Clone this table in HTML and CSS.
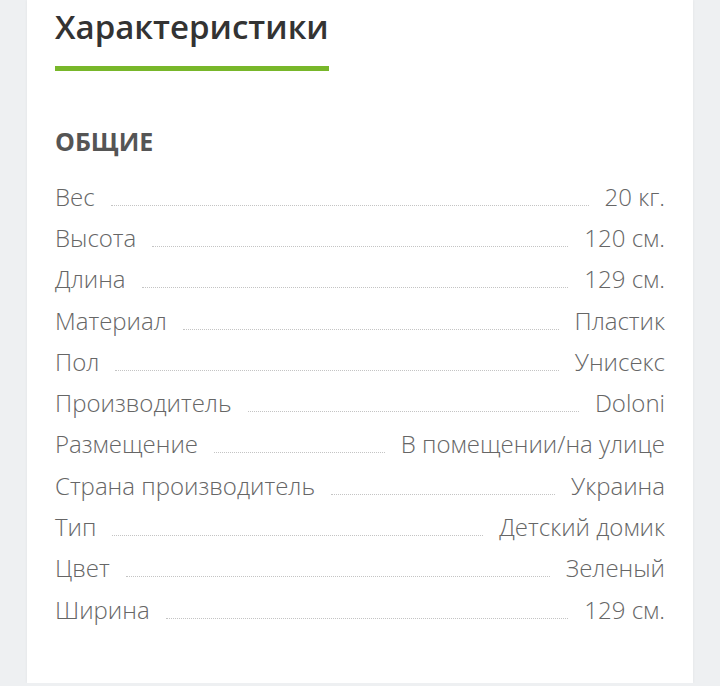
FILE: index.html
```html
<!DOCTYPE html>
<html lang="ru">
<head>
<meta charset="utf-8">
<title>Характеристики</title>
<link rel="stylesheet" href="styles.css">
</head>
<body>
<div class="card">
  <h2 class="title">Характеристики</h2>
  <h3 class="group">ОБЩИЕ</h3>
  <div class="specs">
    <div class="row"><span class="name">Вес</span><span class="dots"></span><span class="val">20 кг.</span></div>
    <div class="row"><span class="name">Высота</span><span class="dots"></span><span class="val">120 см.</span></div>
    <div class="row"><span class="name">Длина</span><span class="dots"></span><span class="val">129 см.</span></div>
    <div class="row"><span class="name">Материал</span><span class="dots"></span><span class="val">Пластик</span></div>
    <div class="row"><span class="name">Пол</span><span class="dots"></span><span class="val">Унисекс</span></div>
    <div class="row"><span class="name">Производитель</span><span class="dots"></span><span class="val">Doloni</span></div>
    <div class="row"><span class="name">Размещение</span><span class="dots"></span><span class="val">В помещении/на улице</span></div>
    <div class="row"><span class="name">Страна производитель</span><span class="dots"></span><span class="val">Украина</span></div>
    <div class="row"><span class="name">Тип</span><span class="dots"></span><span class="val">Детский домик</span></div>
    <div class="row"><span class="name">Цвет</span><span class="dots"></span><span class="val">Зеленый</span></div>
    <div class="row"><span class="name">Ширина</span><span class="dots"></span><span class="val">129 см.</span></div>
  </div>
</div>
</body>
</html>
```
FILE: styles.css
```css
html, body {
  margin: 0;
  padding: 0;
  background: #eef0f2;
  font-family: "Open Sans", "Liberation Sans", sans-serif;
}
.card {
  margin-left: 27px;
  width: 666px;
  height: 683px;
  box-sizing: border-box;
  padding: 5px 28px 0 28px;
  background: #fff;
  box-shadow: 0 0 3px rgba(0, 0, 0, 0.06);
}
.title {
  display: inline-block;
  margin: 0;
  font-size: 33px;
  line-height: 44px;
  font-weight: 600;
  color: #333;
  padding-bottom: 17px;
  border-bottom: 5px solid #78b72a;
}
.group {
  margin: 54px 0 0 0;
  font-size: 25px;
  line-height: 32px;
  font-weight: 700;
  color: #555;
}
.specs {
  margin-top: 18.7px;
}
.row {
  display: flex;
  align-items: baseline;
  height: 41.3px;
  line-height: 41.3px;
  font-size: 24px;
  font-weight: 300;
  color: #666;
}
.name, .val {
  white-space: nowrap;
}
.dots {
  flex: 1;
  height: 0;
  margin: 0 16px;
  border-bottom: 1px dotted #c4c4c4;
}
```
